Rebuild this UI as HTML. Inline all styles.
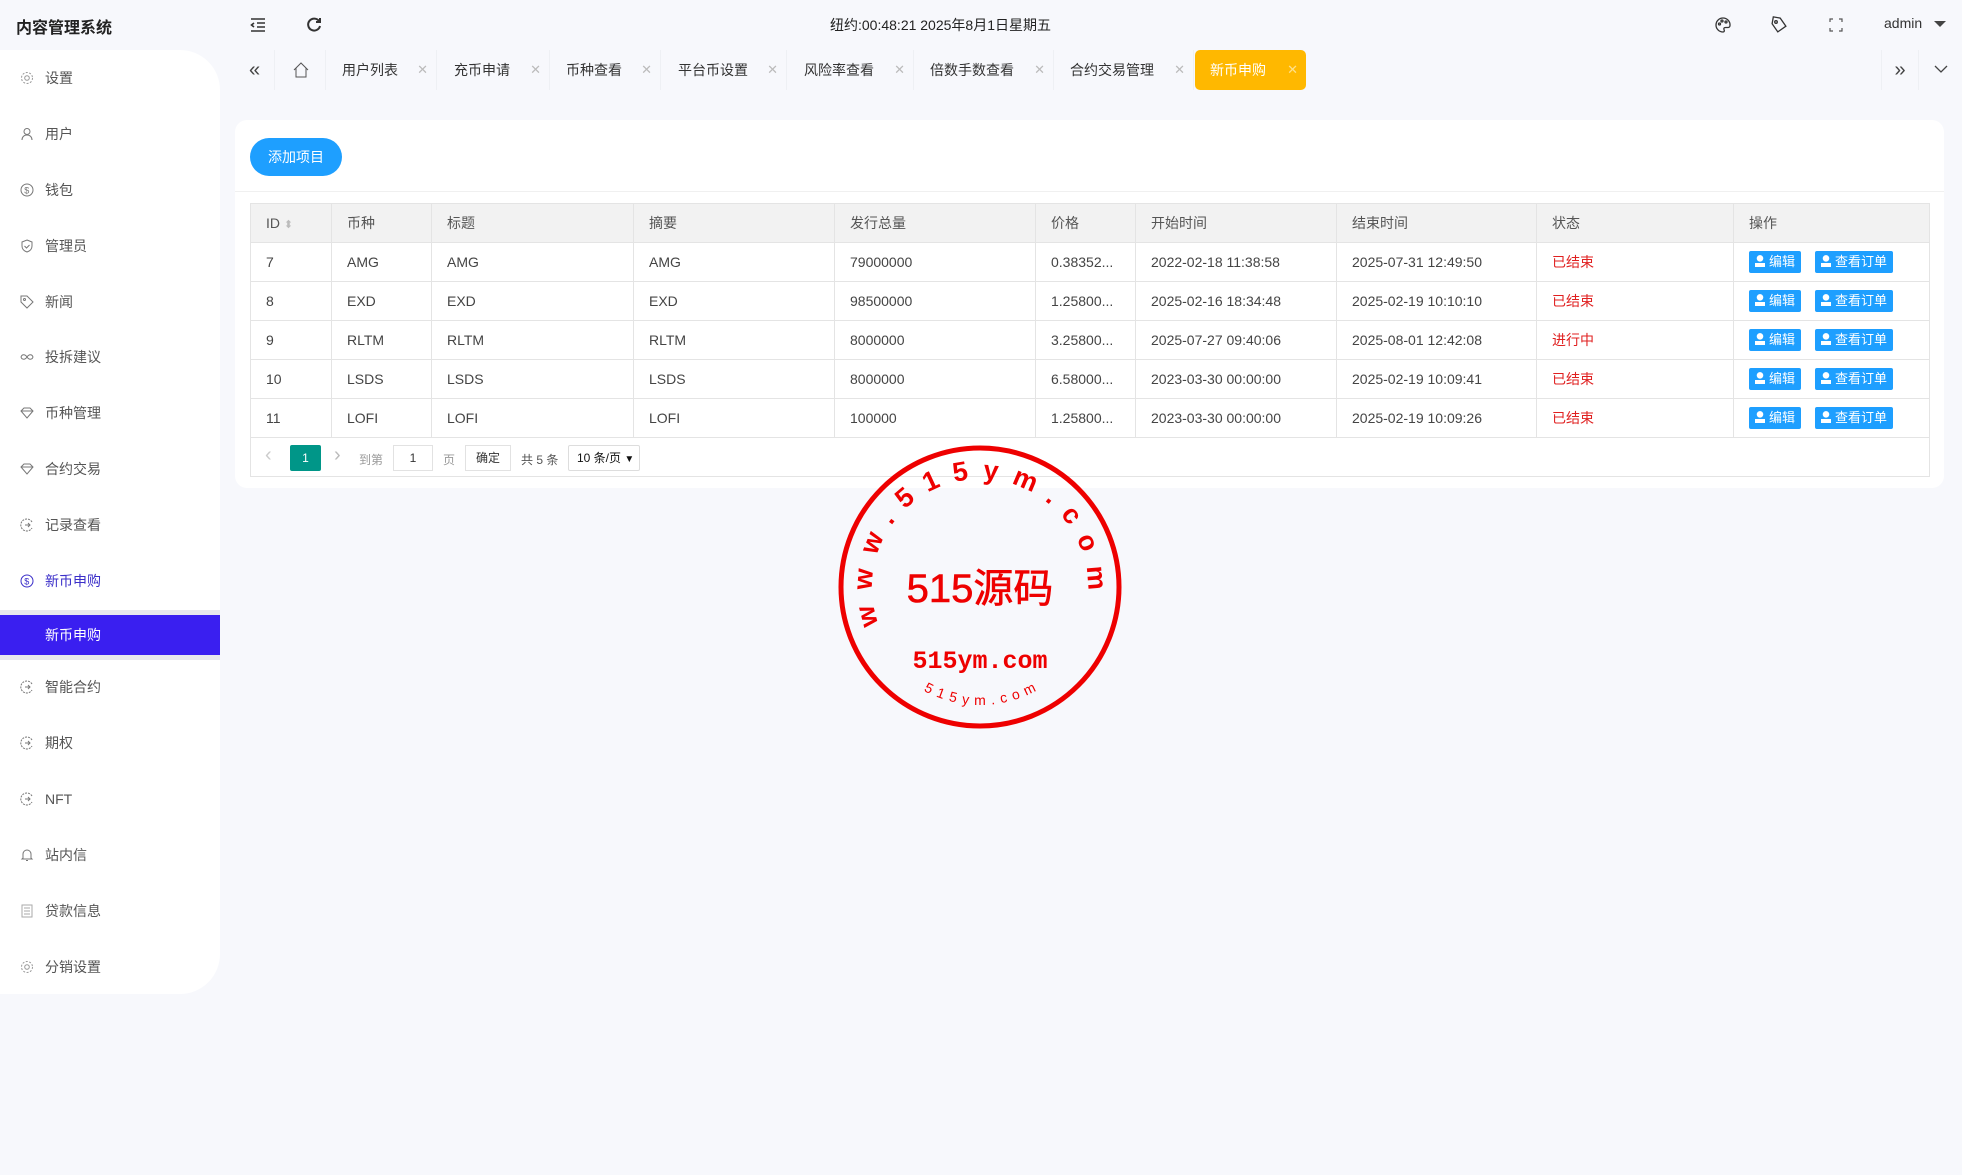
<!DOCTYPE html>
<html><head><meta charset="utf-8"><style>
*{margin:0;padding:0;box-sizing:border-box}
body{width:1962px;height:1175px;background:#f7f8fc;font-family:"Liberation Sans","Noto Sans CJK SC",sans-serif;color:#333;position:relative;overflow:hidden;font-size:14px}
.abs{position:absolute}
.side{left:0;top:50px;width:220px;height:944px;background:#fff;border-radius:0 40px 40px 0}
.mi{position:absolute;left:0;width:220px;height:20px;line-height:20px;color:#555;font-size:14px}
.mi .ic{position:absolute;left:20px;top:3px;width:14px;height:14px}
.mi span{position:absolute;left:45px}
.tab{position:absolute;top:50px;height:40px;line-height:40px;font-size:14px;color:#333;border-right:1px solid #eef0f4}
.tab .x{position:absolute;right:8px;color:#bbb;font-size:13px}
table{border-collapse:collapse;position:absolute;left:250px;top:203px;width:1680px;font-size:14px}
td,th{border:1px solid #e4e4e4;height:39px;padding-left:15px;text-align:left;font-weight:normal;color:#444}
th{background:#f2f2f2;color:#555}
.red{color:#e02020}
.b{display:inline-block;background:#1e9fff;color:#fff;font-size:13px;height:22px;line-height:22px;padding:0 6px 0 6px;border-radius:2px;margin-right:14px}
.b i{display:inline-block;width:10px;height:12px;margin-right:4px;vertical-align:-1px;background:radial-gradient(circle at 50% 28%,#fff 3px,transparent 3.5px),linear-gradient(#fff,#fff) 0 8px/10px 4px no-repeat}
</style></head><body>
<div class="abs" style="left:16px;top:14px;font-size:16px;font-weight:bold;color:#222">内容管理系统</div>
<svg class="abs" style="left:250px;top:17px" width="16" height="16" viewBox="0 0 16 16" fill="none" stroke="#333" stroke-width="1.6"><path d="M1 2h14M7 6h8M7 10h8M1 14h14M4 6L1.5 8 4 10"/></svg>
<svg class="abs" style="left:305px;top:16px" width="18" height="18" viewBox="0 0 18 18" fill="none" stroke="#333" stroke-width="2"><path d="M14 5A6 6 0 1 0 15 10"/><path d="M15 2v4h-4" /></svg>
<div class="abs" style="left:830px;top:15px;font-size:14px;color:#222">纽约:00:48:21 2025年8月1日星期五</div>
<svg class="abs" style="left:1714px;top:16px" width="18" height="18" viewBox="0 0 18 18" fill="none" stroke="#333" stroke-width="1.3"><path d="M9 2a7 7 0 1 0 0 14c1.5 0 1.5-1.5 1-2.5s0-2 1.5-2H14a2 2 0 0 0 2-2A7 7 0 0 0 9 2z"/><circle cx="5.5" cy="8" r="1"/><circle cx="8" cy="5" r="1"/><circle cx="12" cy="6" r="1"/></svg>
<svg class="abs" style="left:1770px;top:16px" width="18" height="18" viewBox="0 0 18 18" fill="none" stroke="#333" stroke-width="1.3"><path d="M2 2h7l7 7-7 7-7-7z" transform="rotate(10 9 9)"/><circle cx="6" cy="6" r="1.3"/></svg>
<svg class="abs" style="left:1829px;top:18px" width="14" height="14" viewBox="0 0 14 14" fill="none" stroke="#555" stroke-width="1.2"><path d="M1 4V1h3M10 1h3v3M13 10v3h-3M4 13H1v-3"/></svg>
<div class="abs" style="left:1884px;top:15px;font-size:14px;color:#333">admin</div>
<div class="abs" style="left:1934px;top:21px;border:6px solid transparent;border-top:6px solid #444;border-bottom:0"></div>

<div class="abs side"></div>
<div class="mi" style="top:68px"><svg class="ic" viewBox="0 0 14 14" fill="none" stroke="#999"><circle cx="7" cy="7" r="2.3"/><circle cx="7" cy="7" r="5.5" stroke-dasharray="2 1.5"/></svg><span>设置</span></div>
<div class="mi" style="top:124px"><svg class="ic" viewBox="0 0 14 14" fill="none" stroke="#777"><circle cx="7" cy="4.5" r="3"/><path d="M2 13c0-3 2-5 5-5s5 2 5 5"/></svg><span>用户</span></div>
<div class="mi" style="top:180px"><svg class="ic" viewBox="0 0 14 14" fill="none" stroke="#777"><circle cx="7" cy="7" r="6"/><text x="4.3" y="10.5" font-size="9" fill="#777" stroke="none">$</text></svg><span>钱包</span></div>
<div class="mi" style="top:236px"><svg class="ic" viewBox="0 0 14 14" fill="none" stroke="#777"><path d="M7 1l5 2v4c0 3-2 5-5 6-3-1-5-3-5-6V3z"/><path d="M4.5 7l2 2 3-3"/></svg><span>管理员</span></div>
<div class="mi" style="top:292px"><svg class="ic" viewBox="0 0 14 14" fill="none" stroke="#777"><path d="M1 1h6l6 6-6 6-6-6z"/><circle cx="4.5" cy="4.5" r="1"/></svg><span>新闻</span></div>
<div class="mi" style="top:347px"><svg class="ic" viewBox="0 0 14 14" fill="none" stroke="#777"><path d="M1 7c1-3 4-3 6 0s5 3 6 0c-1-3-4-3-6 0s-5 3-6 0z"/></svg><span>投拆建议</span></div>
<div class="mi" style="top:403px"><svg class="ic" viewBox="0 0 14 14" fill="none" stroke="#777"><path d="M1 5l3-3h6l3 3-6 7z M1 5h12"/></svg><span>币种管理</span></div>
<div class="mi" style="top:459px"><svg class="ic" viewBox="0 0 14 14" fill="none" stroke="#777"><path d="M1 5l3-3h6l3 3-6 7z M1 5h12"/></svg><span>合约交易</span></div>
<div class="mi" style="top:515px"><svg class="ic" viewBox="0 0 14 14" fill="none" stroke="#777"><path d="M12 4A6 6 0 1 0 12 10" stroke-dasharray="2 1"/><path d="M5 7h5M8 5l2 2-2 2"/></svg><span>记录查看</span></div>
<div class="mi" style="top:571px;color:#3b2fc9"><svg class="ic" viewBox="0 0 14 14" fill="none" stroke="#3b2fc9"><circle cx="7" cy="7" r="6"/><text x="4.3" y="10.5" font-size="9" fill="#3b2fc9" stroke="none">$</text></svg><span>新币申购</span></div>
<div class="abs" style="left:0;top:610px;width:220px;height:50px;background:#e8e8ee"></div>
<div class="abs" style="left:0;top:615px;width:220px;height:40px;background:#3a1ff0;color:#fff;line-height:40px;font-size:14px;padding-left:45px">新币申购</div>
<div class="mi" style="top:677px"><svg class="ic" viewBox="0 0 14 14" fill="none" stroke="#777"><path d="M12 4A6 6 0 1 0 12 10" stroke-dasharray="2 1"/><path d="M5 7h5M8 5l2 2-2 2"/></svg><span>智能合约</span></div>
<div class="mi" style="top:733px"><svg class="ic" viewBox="0 0 14 14" fill="none" stroke="#777"><path d="M12 4A6 6 0 1 0 12 10" stroke-dasharray="2 1"/><path d="M5 7h5M8 5l2 2-2 2"/></svg><span>期权</span></div>
<div class="mi" style="top:789px"><svg class="ic" viewBox="0 0 14 14" fill="none" stroke="#777"><path d="M12 4A6 6 0 1 0 12 10" stroke-dasharray="2 1"/><path d="M5 7h5M8 5l2 2-2 2"/></svg><span>NFT</span></div>
<div class="mi" style="top:845px"><svg class="ic" viewBox="0 0 14 14" fill="none" stroke="#777"><path d="M3 10V6a4 4 0 0 1 8 0v4l1 1H2z M6 12.5h2"/></svg><span>站内信</span></div>
<div class="mi" style="top:901px"><svg class="ic" viewBox="0 0 14 14" fill="none" stroke="#aaa"><rect x="2" y="1" width="10" height="12"/><path d="M4 4h6M4 7h6M4 10h6"/></svg><span>贷款信息</span></div>
<div class="mi" style="top:957px"><svg class="ic" viewBox="0 0 14 14" fill="none" stroke="#999"><circle cx="7" cy="7" r="2.3"/><circle cx="7" cy="7" r="5.5" stroke-dasharray="2 1.5"/></svg><span>分销设置</span></div>

<div class="tab" style="left:235px;width:40px;text-align:center;font-size:20px;color:#444">«</div>
<div class="tab" style="left:275px;width:51px"><svg style="position:absolute;left:18px;top:12px" width="16" height="16" viewBox="0 0 16 16" fill="none" stroke="#555"><path d="M1 8L8 1l7 7M3 6v9h10V6"/></svg></div>
<div class="tab" style="left:326px;width:111px;padding-left:16px">用户列表<span class="x">✕</span></div>
<div class="tab" style="left:437px;width:113px;padding-left:17px">充币申请<span class="x">✕</span></div>
<div class="tab" style="left:550px;width:111px;padding-left:16px">币种查看<span class="x">✕</span></div>
<div class="tab" style="left:661px;width:126px;padding-left:17px">平台币设置<span class="x">✕</span></div>
<div class="tab" style="left:787px;width:127px;padding-left:17px">风险率查看<span class="x">✕</span></div>
<div class="tab" style="left:914px;width:140px;padding-left:16px">倍数手数查看<span class="x">✕</span></div>
<div class="tab" style="left:1054px;width:140px;padding-left:16px">合约交易管理<span class="x">✕</span></div>
<div class="tab" style="left:1195px;width:111px;padding-left:15px;background:#ffb800;color:#fff;border-radius:5px;border:0">新币申购<span class="x" style="color:#ffe08a">✕</span></div>
<div class="tab" style="left:1881px;width:38px;text-align:center;font-size:20px;color:#444;border-left:1px solid #eef0f4">»</div>
<svg class="abs" style="left:1934px;top:64px" width="14" height="10" viewBox="0 0 14 10" fill="none" stroke="#444" stroke-width="1.3"><path d="M1 2l6 6 6-6"/></svg>

<div class="abs" style="left:235px;top:120px;width:1709px;height:368px;background:#fff;border-radius:12px"></div>
<div class="abs" style="left:235px;top:191px;width:1709px;height:1px;background:#f0f0f0"></div>
<div class="abs" style="left:250px;top:138px;width:92px;height:38px;background:#1e9fff;border-radius:19px;color:#fff;text-align:center;line-height:38px;font-size:14px">添加项目</div>
<div class="abs" style="left:250px;top:242px;width:1680px;height:235px;border:1px solid #e4e4e4"></div>
<table>
<tr><th style="width:81px">ID <span style="color:#bbb;font-size:11px">⬍</span></th><th style="width:100px">币种</th><th style="width:202px">标题</th><th style="width:201px">摘要</th><th style="width:201px">发行总量</th><th style="width:100px">价格</th><th style="width:201px">开始时间</th><th style="width:200px">结束时间</th><th style="width:197px">状态</th><th>操作</th></tr>
<tr><td>7</td><td>AMG</td><td>AMG</td><td>AMG</td><td>79000000</td><td>0.38352...</td><td>2022-02-18 11:38:58</td><td>2025-07-31 12:49:50</td><td class="red">已结束</td><td><span class="b"><i></i>编辑</span><span class="b"><i></i>查看订单</span></td></tr>
<tr><td>8</td><td>EXD</td><td>EXD</td><td>EXD</td><td>98500000</td><td>1.25800...</td><td>2025-02-16 18:34:48</td><td>2025-02-19 10:10:10</td><td class="red">已结束</td><td><span class="b"><i></i>编辑</span><span class="b"><i></i>查看订单</span></td></tr>
<tr><td>9</td><td>RLTM</td><td>RLTM</td><td>RLTM</td><td>8000000</td><td>3.25800...</td><td>2025-07-27 09:40:06</td><td>2025-08-01 12:42:08</td><td class="red">进行中</td><td><span class="b"><i></i>编辑</span><span class="b"><i></i>查看订单</span></td></tr>
<tr><td>10</td><td>LSDS</td><td>LSDS</td><td>LSDS</td><td>8000000</td><td>6.58000...</td><td>2023-03-30 00:00:00</td><td>2025-02-19 10:09:41</td><td class="red">已结束</td><td><span class="b"><i></i>编辑</span><span class="b"><i></i>查看订单</span></td></tr>
<tr><td>11</td><td>LOFI</td><td>LOFI</td><td>LOFI</td><td>100000</td><td>1.25800...</td><td>2023-03-30 00:00:00</td><td>2025-02-19 10:09:26</td><td class="red">已结束</td><td><span class="b"><i></i>编辑</span><span class="b"><i></i>查看订单</span></td></tr>
</table>
<div class="abs" style="left:265px;top:444px;color:#ccc;font-size:20px">‹</div>
<div class="abs" style="left:290px;top:445px;width:31px;height:26px;background:#009688;color:#fff;border-radius:2px;text-align:center;line-height:26px;font-size:12px">1</div>
<div class="abs" style="left:334px;top:444px;color:#bbb;font-size:20px">›</div>
<div class="abs" style="left:359px;top:451px;color:#999;font-size:12px">到第</div>
<div class="abs" style="left:393px;top:445px;width:40px;height:26px;border:1px solid #e2e2e2;text-align:center;line-height:24px;font-size:12px">1</div>
<div class="abs" style="left:443px;top:451px;color:#999;font-size:12px">页</div>
<div class="abs" style="left:465px;top:445px;width:46px;height:26px;border:1px solid #e2e2e2;text-align:center;line-height:24px;font-size:12px">确定</div>
<div class="abs" style="left:521px;top:451px;color:#555;font-size:12px">共 5 条</div>
<div class="abs" style="left:568px;top:445px;width:72px;height:26px;border:1px solid #ddd;border-radius:2px;line-height:24px;font-size:12px;padding-left:8px;color:#111">10 条/页 <span style="font-size:10px">▼</span></div>

<svg class="abs" style="left:838px;top:445px" width="284" height="284" viewBox="0 0 284 284">
<defs>
<path id="cp" d="M40.5 179 A108 108 0 1 1 249.6 151.4"/>
<path id="cp2" d="M24 142 A118 118 0 0 0 260 142"/>
</defs>
<circle cx="142" cy="142" r="139" fill="none" stroke="#e00" stroke-width="5"/>
<text font-family="Liberation Sans,sans-serif" font-size="27" font-weight="bold" fill="#e00"><textPath href="#cp" textLength="380" lengthAdjust="spacing">www.515ym.com</textPath></text>
<text x="142" y="157" text-anchor="middle" font-family="Liberation Sans,Noto Sans CJK SC,sans-serif" font-size="40" fill="#e00" stroke="#e00" stroke-width="0.6">515源码</text>
<text x="142" y="223" text-anchor="middle" font-family="Liberation Mono,monospace" font-size="25" font-weight="bold" fill="#e00">515ym.com</text>
<text font-family="Liberation Sans,sans-serif" font-size="14" fill="#e00" text-anchor="middle"><textPath href="#cp2" startOffset="50%" textLength="118" lengthAdjust="spacing">515ym.com</textPath></text>
</svg>
</body></html>
